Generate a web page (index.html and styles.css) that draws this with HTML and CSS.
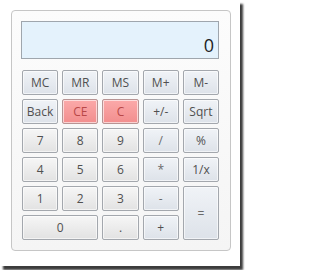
FILE: index.html
```html
<!DOCTYPE html>
<html>
<head>
<meta charset="utf-8">
<link rel="stylesheet" href="styles.css">
</head>
<body>
<div class="window">
  <div class="calc">
    <div class="display">0</div>
    <div class="keys">
      <button class="key op">MC</button>
      <button class="key op">MR</button>
      <button class="key op">MS</button>
      <button class="key op">M+</button>
      <button class="key op">M-</button>
      <button class="key op">Back</button>
      <button class="key clear">CE</button>
      <button class="key clear">C</button>
      <button class="key op">+/-</button>
      <button class="key op">Sqrt</button>
      <button class="key num">7</button>
      <button class="key num">8</button>
      <button class="key num">9</button>
      <button class="key op faint">/</button>
      <button class="key op">%</button>
      <button class="key num">4</button>
      <button class="key num">5</button>
      <button class="key num">6</button>
      <button class="key op faint">*</button>
      <button class="key op">1/x</button>
      <button class="key num">1</button>
      <button class="key num">2</button>
      <button class="key num">3</button>
      <button class="key op faint">-</button>
      <button class="key op faint equals">=</button>
      <button class="key num zero">0</button>
      <button class="key num">.</button>
      <button class="key op">+</button>
    </div>
  </div>
</div>
</body>
</html>
```
FILE: styles.css
```css
html, body {
  margin: 0;
  padding: 0;
  background: #ffffff;
}
body {
  width: 245px;
  height: 270px;
  overflow: hidden;
  font-family: "Open Sans", "Noto Sans", sans-serif;
}
.window {
  width: 240px;
  height: 266px;
  background: #ffffff;
  box-shadow: 3px 4px 2px #3c3c3c;
  padding: 10px 0 0 11px;
  box-sizing: border-box;
}
.calc {
  width: 220px;
  height: 241px;
  box-sizing: border-box;
  border: 1px solid #c6c6c6;
  border-radius: 4px;
  background: linear-gradient(#fcfcfc, #f5f5f5);
  padding: 10px 11px 10px 10px;
  display: flex;
  flex-direction: column;
}
.display {
  height: 38px;
  box-sizing: border-box;
  margin-left: -1px;
  border: 1px solid #9fa6ad;
  background: #e4f2fc;
  color: #1e1e1e;
  font-size: 18px;
  line-height: 18px;
  text-align: right;
  padding: 14px 4px 0 0;
}
.keys {
  margin-top: 11px;
  display: grid;
  grid-template-columns: repeat(5, 1fr);
  grid-template-rows: repeat(6, 25px);
  column-gap: 4px;
  row-gap: 4px;
}
.key {
  margin: 0;
  padding: 0;
  font-family: "Open Sans", "Noto Sans", sans-serif;
  font-size: 12px;
  color: #505050;
  border: 1px solid #a3a7ad;
  border-radius: 2px;
  box-shadow: inset 0 0 0 1px rgba(255, 255, 255, 0.6);
  display: flex;
  align-items: center;
  justify-content: center;
}
.op {
  background: linear-gradient(#f0f3f7, #dde2e9);
}
.num {
  background: linear-gradient(#f6f6f6, #e2e2e2);
}
.clear {
  background: linear-gradient(#fba9a9, #f28e8e);
  border-color: #b79494;
  color: #b84848;
}
.faint {
  color: #6a6a6a;
}
.equals {
  grid-row: span 2;
}
.zero {
  grid-column: span 2;
}
```
